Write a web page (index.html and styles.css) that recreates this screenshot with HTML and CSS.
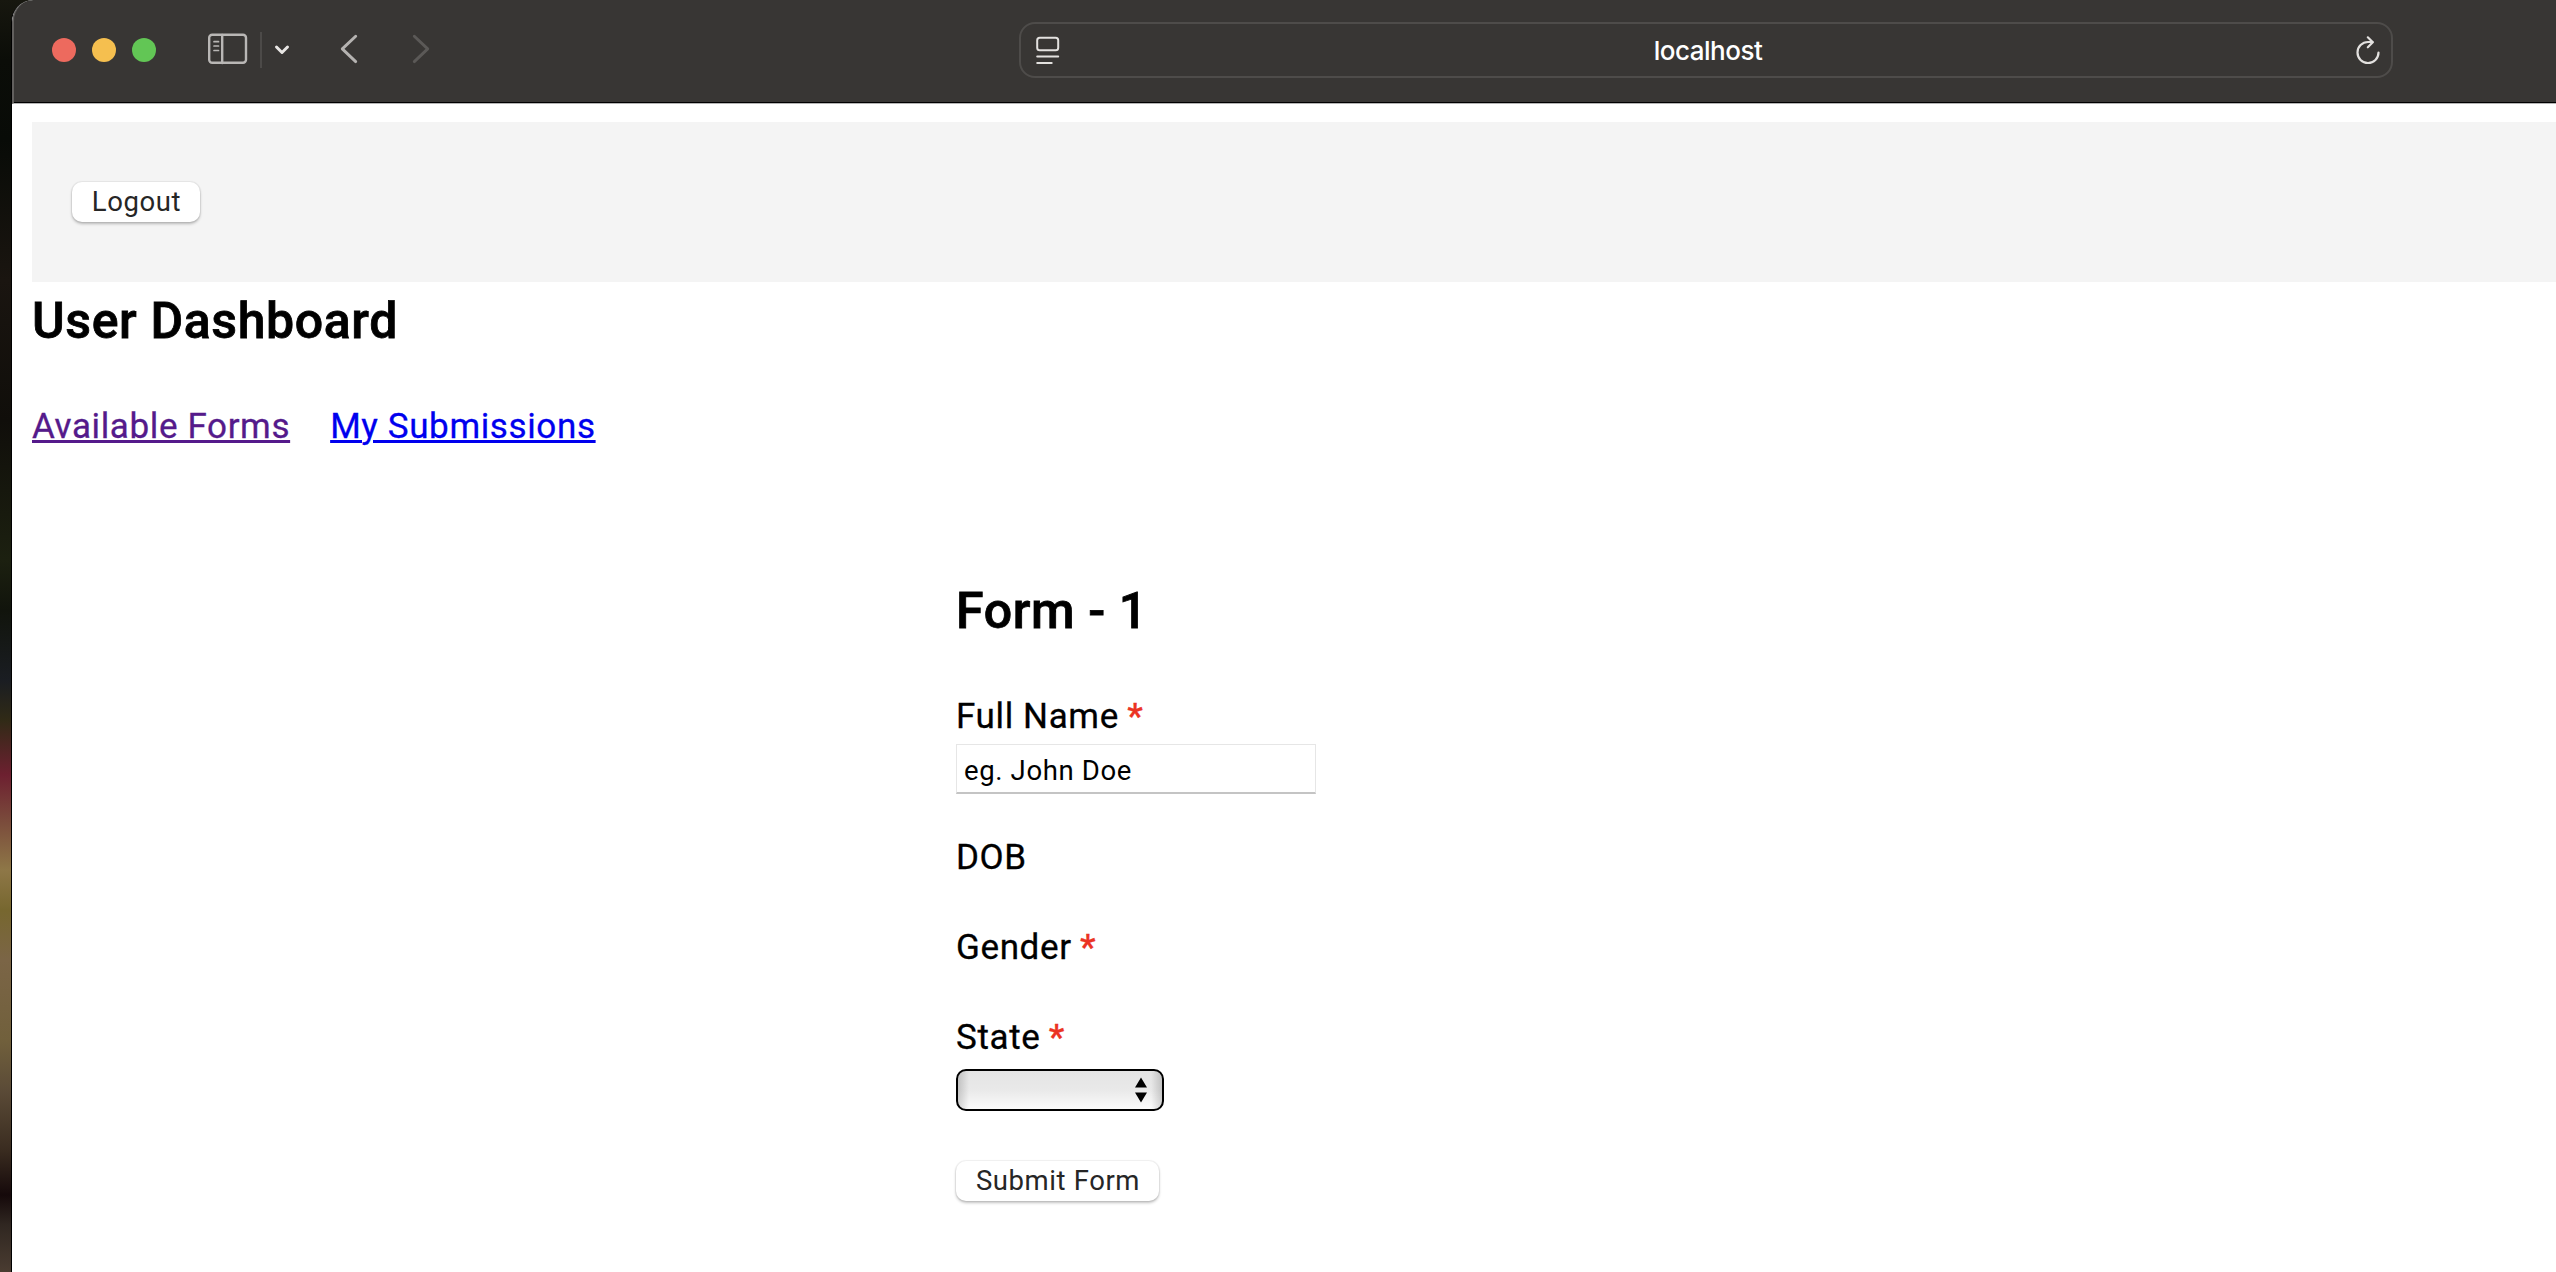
FILE: index.html
```html
<!DOCTYPE html>
<html lang="en">
<head>
<meta charset="utf-8">
<title>User Dashboard</title>
<link rel="stylesheet" href="styles.css">
</head>
<body>
<div class="window">
  <header class="toolbar">
    <div class="lights"><span class="light red"></span><span class="light yellow"></span><span class="light green"></span></div>
    <svg class="icon sidebar" width="40" height="32" viewBox="0 0 40 32" fill="none" stroke="#b9b7b5" stroke-width="2.4" stroke-linecap="round">
      <rect x="1.200" y="1.800" width="36.800" height="28" rx="3"/>
      <path d="M14.200 2v28"/>
      <path d="M6 8.700h4.500M6 13h4.500M6 17.500h4.500" stroke-width="1.700"/>
    </svg>
    <span class="divider"></span>
    <svg class="icon caret" width="16" height="12" viewBox="0 0 16 12" fill="none" stroke="#e8e6e4" stroke-width="3" stroke-linecap="round" stroke-linejoin="round"><path d="M2.500 3l5.500 5.500L13.500 3"/></svg>
    <svg class="icon back" width="18" height="30" viewBox="0 0 18 30" fill="none" stroke="#b5b3b1" stroke-width="2.900" stroke-linecap="round" stroke-linejoin="round"><path d="M15.700 2.200L2.300 14.900l13.400 12.700"/></svg>
    <svg class="icon forward" width="18" height="30" viewBox="0 0 18 30" fill="none" stroke="#5b5957" stroke-width="2.900" stroke-linecap="round" stroke-linejoin="round"><path d="M2.300 2.200l13.400 12.700L2.300 27.600"/></svg>
    <div class="address">
      <svg width="24" height="30" viewBox="0 0 24 30" fill="none" stroke="#e3e1df" stroke-width="2" stroke-linecap="round">
        <rect x="1.200" y="2.800" width="21" height="12.400" rx="2.500"/>
        <path d="M1.200 21.400h21M1.200 27.900h14.500"/>
      </svg>
      <span class="host">localhost</span>
      <svg width="24" height="30" viewBox="0 0 24 30" fill="none" stroke="#e3e1df" stroke-width="2.200" stroke-linecap="round" stroke-linejoin="round">
        <path d="M22.500 17.500a10.500 10.500 0 1 1-10.500-10.500h4.500"/>
        <path d="M11.800 2.300l5 5-5 5"/>
      </svg>
    </div>
  </header>
  <main class="page">
    <div class="banner"><button class="button">Logout</button></div>
    <h2>User Dashboard</h2>
    <nav><a class="visited" href="#">Available Forms</a><a href="#">My Submissions</a></nav>
    <form class="form">
      <h2>Form - 1</h2>
      <div class="field"><label for="name">Full Name <b>*</b></label><input id="name" class="input" type="text" value="eg. John Doe"></div>
      <div class="field"><label>DOB</label></div>
      <div class="field"><label>Gender <b>*</b></label></div>
      <div class="field"><label>State <b>*</b></label>
        <div class="select"><svg width="12" height="26" viewBox="0 0 12 26"><path d="M6 .5l6 10H0zM6 25.500l6-10H0z"/></svg></div>
      </div>
      <button class="button submit" type="button">Submit Form</button>
    </form>
  </main>
</div>
</body>
</html>
```
FILE: styles.css
```css
* { box-sizing: border-box; }

body {
  margin: 0;
  height: 1272px;
  padding-left: 11px;
  overflow: hidden;
  background: linear-gradient(#17170f 0, #0b0d08 60px, #080b07 140px, #1a1510 280px, #100e0a 420px, #1c2010 560px, #11140c 610px, #1a1d22 680px, #302a16 720px, #6d2030 775px, #7a4a3b 820px, #8e7747 870px, #77672f 910px, #7b6546 960px, #71603c 1040px, #5b4b37 1090px, #3a2c20 1150px, #15090a 1195px, #302721 1225px, #4a3c31 1272px);
  color: #000;
  font: 400 35px/50px Roboto, "Liberation Sans", sans-serif;
  letter-spacing: 0.625px;
  -webkit-text-stroke: 0.3px;
}

.window {
  height: 1272px;
  border-left: 1px solid #000;
  border-top-left-radius: 22px;
  background: #fff;
  overflow: hidden;
}

.toolbar {
  display: flex;
  align-items: flex-start;
  height: 104px;
  border-left: 2px solid #62605e;
  border-top-left-radius: 21px;
  border-bottom: 1px solid #b5b5b5;
  background: #383634;
  box-shadow: inset 0 -1px #000;
}

.lights { display: flex; gap: 16px; padding: 38px 0 0 38px; }
.light { width: 24px; height: 24px; border-radius: 50%; }
.red { background: #ed6a5e; }
.yellow { background: #f5bf4f; }
.green { background: #62c655; }

.icon { flex: none; }
.sidebar { margin: 33px 0 0 52px; }
.divider { width: 2px; height: 36px; margin: 32px 0 0 12px; background: #4c4a48; }
.caret { margin: 44px 0 0 12px; }
.back { margin: 34px 0 0 50px; }
.forward { margin: 34px 0 0 54px; }

.address {
  display: flex;
  align-items: center;
  justify-content: space-between;
  width: 1374px;
  height: 56px;
  margin: 22px 0 0 589px;
  padding: 0 11px 0 15px;
  border: 2px solid #4e4c4a;
  border-radius: 16px;
}

.host {
  padding-top: 2px;
  color: #fff;
  font: 500 26px/32px Inter, "Liberation Sans", sans-serif;
  letter-spacing: -0.5px;
  -webkit-text-stroke: 0;
}

.page { padding: 18px 0 0 20px; }

.banner { height: 160px; padding: 60px 40px; background: #f4f4f4; }

.button {
  display: block;
  width: 128px;
  height: 40px;
  padding: 0 0 0 1px;
  border: 0;
  border-radius: 10px;
  background: #fff;
  box-shadow: 0 0 1px 1px rgba(0, 0, 0, 0.06), 0 2px 3px rgba(0, 0, 0, 0.24);
  color: #262626;
  font: 400 27.5px/38px Roboto, "Liberation Sans", sans-serif;
  letter-spacing: 0.6px;
  -webkit-text-stroke: 0;
}

h2 {
  margin: 0 0 42px;
  font-size: 50px;
  line-height: 78px;
  font-weight: 500;
  letter-spacing: 0.625px;
  -webkit-text-stroke: 0.8px;
}

nav { display: flex; gap: 40px; }
a { color: #0000ee; text-decoration-thickness: 3px; }
.visited { color: #551a8b; }

.form { width: 660px; margin: 120px 0 0 924px; }

.field { margin-bottom: 40px; }
.field label { display: block; }
.field b { margin-left: -1px; color: #eb3323; font-weight: 500; }

.input {
  display: block;
  width: 360px;
  height: 50px;
  margin-top: 2px;
  margin-bottom: -1px;
  padding: 4px 7px 0;
  border: 1px solid #e6e6e6;
  border-bottom: 2px solid #c4c4c4;
  background: #fff;
  color: #000;
  font: 400 27.5px/36px Roboto, "Liberation Sans", sans-serif;
  letter-spacing: 0.625px;
  -webkit-text-stroke: 0;
  outline: 0;
}

.select {
  display: flex;
  align-items: center;
  justify-content: flex-end;
  width: 208px;
  height: 42px;
  margin-top: 6px;
  padding-right: 15px;
  border: 2px solid #000;
  border-radius: 10px;
  background: linear-gradient(90deg, rgba(0, 0, 0, 0.16), transparent 11px calc(100% - 11px), rgba(0, 0, 0, 0.16)), linear-gradient(#e4e4e4, #e9e9e9 50%, #fbfbfb);
}

.submit { width: 203px; margin-top: 50px; }
```
